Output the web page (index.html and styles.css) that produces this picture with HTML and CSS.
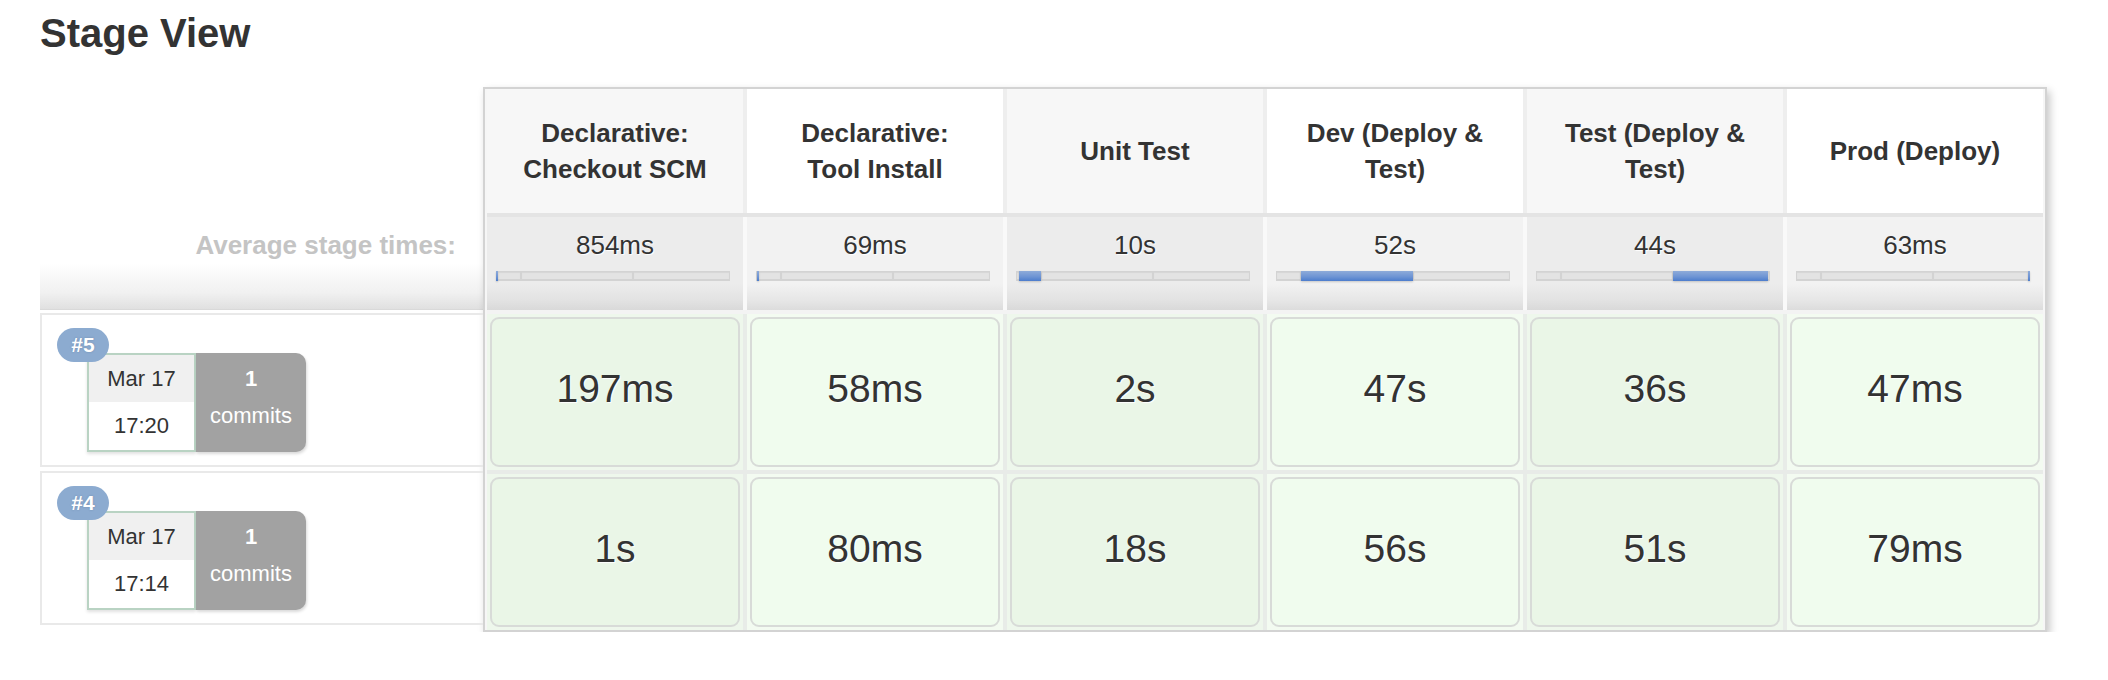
FILE: index.html
```html
<!DOCTYPE html>
<html>
<head>
<meta charset="utf-8">
<title>Stage View</title>
<link rel="stylesheet" href="styles.css">
</head>
<body>
<div class="page">
  <h2 class="title">Stage View</h2>
  <div class="stage-view">
    <div class="runs-col">
      <div class="runs-head"></div>
      <div class="runs-avg">Average stage times:</div>
      <div class="run">
        <span class="badge">#5</span>
        <div class="run-info">
          <div class="date"><div class="day">Mar 17</div><div class="time">17:20</div></div>
          <div class="commits"><b>1</b><span>commits</span></div>
        </div>
      </div>
      <div class="run">
        <span class="badge">#4</span>
        <div class="run-info">
          <div class="date"><div class="day">Mar 17</div><div class="time">17:14</div></div>
          <div class="commits"><b>1</b><span>commits</span></div>
        </div>
      </div>
    </div>

    <div class="table">
      <div class="row head">
        <div class="th odd">Declarative: Checkout SCM</div>
        <div class="th even">Declarative: Tool Install</div>
        <div class="th odd">Unit Test</div>
        <div class="th even">Dev (Deploy &amp; Test)</div>
        <div class="th odd">Test (Deploy &amp; Test)</div>
        <div class="th even">Prod (Deploy)</div>
      </div>
      <div class="row avg">
        <div class="avg-cell odd"><div class="avg-time">854ms</div>
          <div class="bar"><span class="seg s1"></span><span class="seg s2"></span><span class="seg s3"></span><span class="fill" style="left:0;width:2px"></span></div></div>
        <div class="avg-cell even"><div class="avg-time">69ms</div>
          <div class="bar"><span class="seg s1"></span><span class="seg s2"></span><span class="seg s3"></span><span class="fill" style="left:1px;width:2px"></span></div></div>
        <div class="avg-cell odd"><div class="avg-time">10s</div>
          <div class="bar"><span class="seg s1"></span><span class="seg s2"></span><span class="seg s3"></span><span class="fill" style="left:3px;width:22px"></span></div></div>
        <div class="avg-cell even"><div class="avg-time">52s</div>
          <div class="bar"><span class="seg s1"></span><span class="seg s2"></span><span class="seg s3"></span><span class="fill" style="left:25px;width:112px"></span></div></div>
        <div class="avg-cell odd"><div class="avg-time">44s</div>
          <div class="bar"><span class="seg s1"></span><span class="seg s2"></span><span class="seg s3"></span><span class="fill" style="left:137px;width:95px"></span></div></div>
        <div class="avg-cell even"><div class="avg-time">63ms</div>
          <div class="bar"><span class="seg s1"></span><span class="seg s2"></span><span class="seg s3"></span><span class="fill" style="left:232px;width:2px"></span></div></div>
      </div>
      <div class="row run-row">
        <div class="td odd"><div class="card">197ms</div></div>
        <div class="td even"><div class="card">58ms</div></div>
        <div class="td odd"><div class="card">2s</div></div>
        <div class="td even"><div class="card">47s</div></div>
        <div class="td odd"><div class="card">36s</div></div>
        <div class="td even"><div class="card">47ms</div></div>
      </div>
      <div class="row run-row second">
        <div class="td odd"><div class="card">1s</div></div>
        <div class="td even"><div class="card">80ms</div></div>
        <div class="td odd"><div class="card">18s</div></div>
        <div class="td even"><div class="card">56s</div></div>
        <div class="td odd"><div class="card">51s</div></div>
        <div class="td even"><div class="card">79ms</div></div>
      </div>
    </div>
  </div>
</div>
</body>
</html>
```

FILE: styles.css
```css
* { box-sizing: border-box; }

html, body {
  margin: 0;
  padding: 0;
  background: #fff;
}

body {
  font-family: "Liberation Sans", Arial, Helvetica, sans-serif;
  color: #333;
}

.page {
  padding: 10px 0 0 40px;
}

.title {
  margin: 0;
  font-size: 40px;
  line-height: 46px;
  font-weight: bold;
  color: #333;
}

.stage-view {
  display: flex;
  align-items: flex-start;
  margin-top: 31px;
}

/* ---------- left column ---------- */
.runs-col {
  width: 443px;
  display: flex;
  flex-direction: column;
}

.runs-head {
  height: 130px;
}

.runs-avg {
  height: 93px;
  padding: 13px 27px 0 0;
  text-align: right;
  font-size: 26px;
  line-height: 30px;
  font-weight: bold;
  color: #c4c4c4;
  background: linear-gradient(to bottom, #fff 0%, #fff 50%, #f1f1f1 82%, #e0e0e0 100%);
  border-bottom: 1px solid #d9d9d9;
}

.run {
  position: relative;
  height: 154px;
  margin-top: 3px;
  border: 2px solid #e9e9e9;
  border-right: none;
  padding: 38px 0 0 45px;
}

.run + .run {
  margin-top: 4px;
}

.badge {
  position: absolute;
  top: 13px;
  left: 15px;
  z-index: 2;
  width: 52px;
  height: 34px;
  border-radius: 17px;
  background: #8cabd0;
  color: #fff;
  font-size: 21px;
  line-height: 34px;
  font-weight: bold;
  text-align: center;
  text-shadow: 0 0 2px rgba(60, 80, 110, 0.35);
}

.run-info {
  display: flex;
  height: 99px;
}

.date {
  width: 109px;
  border: 2px solid #b9d3c3;
  display: flex;
  flex-direction: column;
  font-size: 22px;
  color: #333;
  text-align: center;
  box-shadow: 0 2px 3px rgba(0, 0, 0, 0.12);
}

.day {
  height: 47px;
  line-height: 47px;
  background: #f0f0f0;
}

.time {
  flex: 1;
  line-height: 48px;
  background: #fff;
}

.commits {
  width: 110px;
  background: #a2a2a2;
  border-radius: 0 10px 10px 0;
  color: #fff;
  font-size: 22px;
  line-height: 37px;
  text-align: center;
  padding-top: 7px;
  display: flex;
  flex-direction: column;
  box-shadow: 1px 2px 3px rgba(0, 0, 0, 0.15);
}

.commits b {
  font-weight: bold;
}

/* ---------- table ---------- */
.table {
  width: 1564px;
  border: 2px solid #d3d3d3;
  padding: 0 2px;
  background: #f6f6f6;
  box-shadow: 3px 4px 8px rgba(0, 0, 0, 0.22);
  display: flex;
  flex-direction: column;
}

.row {
  display: grid;
  grid-template-columns: repeat(6, 256px);
  column-gap: 4px;
}

.head {
  height: 124px;
  background: #eeeeee;
}

.th {
  display: flex;
  align-items: center;
  justify-content: center;
  text-align: center;
  padding: 0 30px;
  font-size: 26px;
  line-height: 36px;
  font-weight: bold;
  color: #333;
}

.th.odd { background: #f7f7f7; }
.th.even { background: #ffffff; }

.avg {
  height: 97px;
  border-top: 4px solid #e4e4e4;
  background: #f9f9f9;
}

.avg-cell {
  padding-top: 13px;
  text-align: center;
}

.avg-cell.odd {
  background: linear-gradient(to bottom, #ececec 0%, #ececec 72%, #e2e2e2 90%, #d9d9d9 100%);
}

.avg-cell.even {
  background: linear-gradient(to bottom, #f2f2f2 0%, #f2f2f2 72%, #e6e6e6 90%, #dcdcdc 100%);
}

.avg-time {
  font-size: 26px;
  line-height: 30px;
  color: #333;
  text-shadow: 1px 1px 1px #fff;
}

.bar {
  position: relative;
  display: flex;
  width: 234px;
  height: 10px;
  margin: 11px 0 0 9px;
  background: #d3d3d3;
}

.seg {
  margin: 1px 1px 2px 1px;
  background: #e3e3e3;
  box-shadow: inset 0 1px 1px rgba(0, 0, 0, 0.06);
}

.seg.s1 { width: 23px; }
.seg.s2 { width: 110px; }
.seg.s3 { flex: 1; }

.fill {
  position: absolute;
  top: 0;
  bottom: 0;
  background: linear-gradient(to bottom, #8eabd9 0%, #6f95d4 55%, #4d7dcd 100%);
  box-shadow: 0 1px 2px rgba(0, 0, 0, 0.18);
}

.run-row {
  height: 160px;
  border-top: 4px solid #f3f3f3;
  background: #e8ece8;
}

.run-row.second {
  border-top-color: #e8ebe8;
}

.td {
  padding: 3px;
}

.td.odd { background: #eef7ec; }
.td.even { background: #f3fbf1; }

.card {
  height: 100%;
  display: flex;
  align-items: center;
  justify-content: center;
  padding-bottom: 6px;
  border: 2px solid #d8dbd8;
  border-radius: 9px;
  font-size: 39px;
  color: #333;
  text-shadow: 1px 1px 1px #fff;
}

.td.odd .card { background: #eaf6e7; }
.td.even .card { background: #f0fcee; }
```
